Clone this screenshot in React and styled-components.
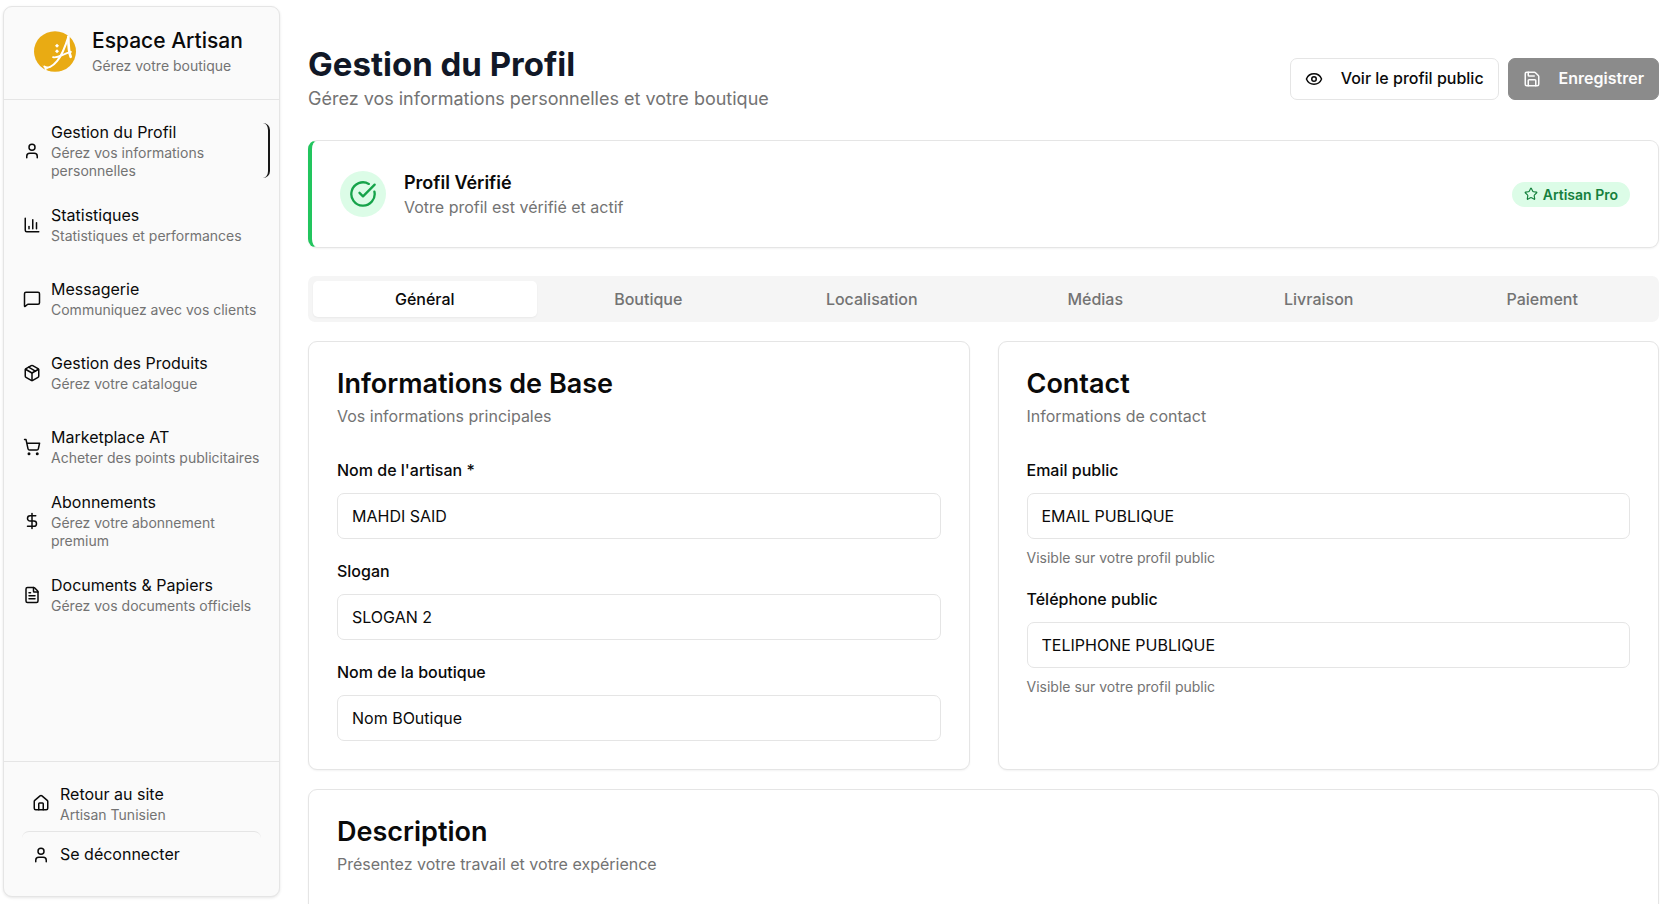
import React, { useState } from "react";
import styled, { createGlobalStyle } from "styled-components";
import {
  User,
  ChartColumn,
  MessageSquare,
  Package,
  ShoppingCart,
  DollarSign,
  FileText,
  Eye,
  Save,
  CircleCheckBig,
  Star,
} from "lucide-react";

const NAV_ITEMS = [
  { icon: User, title: "Gestion du Profil", text: "Gérez vos informations personnelles", active: true },
  { icon: ChartColumn, title: "Statistiques", text: "Statistiques et performances" },
  { icon: MessageSquare, title: "Messagerie", text: "Communiquez avec vos clients" },
  { icon: Package, title: "Gestion des Produits", text: "Gérez votre catalogue" },
  { icon: ShoppingCart, title: "Marketplace AT", text: "Acheter des points publicitaires" },
  { icon: DollarSign, title: "Abonnements", text: "Gérez votre abonnement premium" },
  { icon: FileText, title: "Documents & Papiers", text: "Gérez vos documents officiels" },
];

const TABS = ["Général", "Boutique", "Localisation", "Médias", "Livraison", "Paiement"];

const Logo = () => (
  <LogoSvg viewBox="0 0 126 122" aria-hidden="true">
    <ellipse cx="63" cy="61" rx="63" ry="61" fill="#e9ab13" />
    <g fill="none" stroke="#fff" strokeLinecap="round" strokeLinejoin="round">
      <path d="M103 17C94 46 84 72 69 90C56 106 40 114 31 106" strokeWidth="6" />
      <path d="M103 17C103 42 104 62 110 77" strokeWidth="8" />
      <path d="M57 78C74 82 85 68 111 62" strokeWidth="5" />
    </g>
    <path d="M25 99C27 108 34 113 44 111L34 117Z" fill="#fff" />
    <g fill="#fff">
      <path d="M69 38l6 6-6 6-6-6z" />
      <path d="M69 54l6 6-6 6-6-6z" />
    </g>
  </LogoSvg>
);

const HomeIcon = () => (
  <svg
    width="18"
    height="18"
    viewBox="0 0 24 24"
    fill="none"
    stroke="currentColor"
    strokeWidth="2"
    strokeLinecap="round"
    strokeLinejoin="round"
    aria-hidden="true"
  >
    <path d="M15 21v-8a1 1 0 0 0-1-1h-4a1 1 0 0 0-1 1v8" />
    <path d="M3 10a2 2 0 0 1 .709-1.528l7-5.999a2 2 0 0 1 2.582 0l7 5.999A2 2 0 0 1 21 10v9a2 2 0 0 1-2 2H5a2 2 0 0 1-2-2z" />
  </svg>
);

const TextField = ({ id, label, value, hint }) => (
  <Field>
    <Label htmlFor={id}>{label}</Label>
    <Input id={id} type="text" defaultValue={value} />
    {hint && <Hint>{hint}</Hint>}
  </Field>
);

const App = () => {
  const [tab, setTab] = useState("Général");

  return (
    <>
      <GlobalStyle />
      <Page>
        <Sidebar>
          <Brand>
            <Logo />
            <BrandText>
              <BrandName>Espace Artisan</BrandName>
              <ItemText>Gérez votre boutique</ItemText>
            </BrandText>
          </Brand>
          <Nav>
            {NAV_ITEMS.map(({ icon: Icon, title, text, active }) => (
              <NavItem key={title} href="#" $active={active}>
                <Icon size={18} />
                <div>
                  <ItemTitle>{title}</ItemTitle>
                  <ItemText>{text}</ItemText>
                </div>
              </NavItem>
            ))}
          </Nav>
          <SidebarFooter>
            <FooterLink href="#">
              <HomeIcon />
              <div>
                <ItemTitle>Retour au site</ItemTitle>
                <ItemText>Artisan Tunisien</ItemText>
              </div>
            </FooterLink>
            <Logout type="button">
              <User size={18} />
              <ItemTitle>Se déconnecter</ItemTitle>
            </Logout>
          </SidebarFooter>
        </Sidebar>

        <Main>
          <Header>
            <div>
              <Title>Gestion du Profil</Title>
              <Subtitle>Gérez vos informations personnelles et votre boutique</Subtitle>
            </div>
            <Actions>
              <Button type="button">
                <Eye size={18} />
                Voir le profil public
              </Button>
              <Button type="button" $primary disabled>
                <Save size={18} />
                Enregistrer
              </Button>
            </Actions>
          </Header>

          <StatusCard>
            <StatusIcon>
              <CircleCheckBig size={28} />
            </StatusIcon>
            <StatusBody>
              <StatusTitle>Profil Vérifié</StatusTitle>
              <Muted>Votre profil est vérifié et actif</Muted>
            </StatusBody>
            <Badge>
              <Star size={14} />
              Artisan Pro
            </Badge>
          </StatusCard>

          <TabList role="tablist">
            {TABS.map((name) => (
              <Tab
                key={name}
                type="button"
                role="tab"
                aria-selected={tab === name}
                $active={tab === name}
                onClick={() => setTab(name)}
              >
                {name}
              </Tab>
            ))}
          </TabList>

          <Panel>
            <Columns>
              <Card>
                <CardHeader>
                  <CardTitle>Informations de Base</CardTitle>
                  <Muted>Vos informations principales</Muted>
                </CardHeader>
                <Fields>
                  <TextField id="nom" label="Nom de l'artisan *" value="MAHDI SAID" />
                  <TextField id="slogan" label="Slogan" value="SLOGAN 2" />
                  <TextField id="boutique" label="Nom de la boutique" value="Nom BOutique" />
                </Fields>
              </Card>
              <Card>
                <CardHeader>
                  <CardTitle>Contact</CardTitle>
                  <Muted>Informations de contact</Muted>
                </CardHeader>
                <Fields>
                  <TextField
                    id="email"
                    label="Email public"
                    value="EMAIL PUBLIQUE"
                    hint="Visible sur votre profil public"
                  />
                  <TextField
                    id="telephone"
                    label="Téléphone public"
                    value="TELIPHONE PUBLIQUE"
                    hint="Visible sur votre profil public"
                  />
                </Fields>
              </Card>
            </Columns>
            <DescriptionCard>
              <CardHeader>
                <CardTitle>Description</CardTitle>
                <Muted>Présentez votre travail et votre expérience</Muted>
              </CardHeader>
            </DescriptionCard>
          </Panel>
        </Main>
      </Page>
    </>
  );
};

export default App;

const GlobalStyle = createGlobalStyle`
  *, *::before, *::after {
    box-sizing: border-box;
  }
  body {
    margin: 0;
    background: #fff;
    color: #0a0a0a;
    font-family: Inter, "Liberation Sans", sans-serif;
    font-size: 16px;
    line-height: 23px;
  }
  h1, h2, h3, p {
    margin: 0;
  }
  button, input {
    font: inherit;
    color: inherit;
  }
  svg {
    flex-shrink: 0;
  }
`;

const Page = styled.div`
  display: flex;
  height: 100vh;
  overflow: hidden;
`;

const Sidebar = styled.aside`
  display: flex;
  flex-direction: column;
  flex-shrink: 0;
  width: 277px;
  margin: 6px 0 7px 3px;
  background: #fafafa;
  border: 1px solid #e5e5e5;
  border-radius: 9px;
  box-shadow: 0 1px 3px rgba(0, 0, 0, 0.1);
`;

const Brand = styled.div`
  display: flex;
  align-items: center;
  gap: 16px;
  padding: 20px 30px 24px;
  border-bottom: 1px solid #e5e5e5;
`;

const LogoSvg = styled.svg`
  width: 42px;
  height: 41px;
`;

const BrandText = styled.div`
  display: flex;
  flex-direction: column;
  gap: 2px;
`;

const BrandName = styled.h2`
  font-size: 21px;
  font-weight: 500;
  line-height: 28px;
`;

const ItemTitle = styled.div`
  font-size: 16px;
  line-height: 23px;
`;

const ItemText = styled.div`
  color: #737373;
  font-size: 14px;
  line-height: 18px;
`;

const Nav = styled.nav`
  display: flex;
  flex: 1;
  flex-direction: column;
  gap: 19px;
  padding: 23px 9px;
`;

const NavItem = styled.a`
  display: flex;
  align-items: center;
  gap: 10px;
  height: 55px;
  padding: 0 9px 0 10px;
  border-right: ${(props) => (props.$active ? "2px solid #171717" : "0")};
  border-radius: 7px;
  color: inherit;
  text-decoration: none;
`;

const SidebarFooter = styled.div`
  display: flex;
  flex-direction: column;
  gap: 5px;
  padding: 18px 18px 19px;
  border-top: 1px solid #e5e5e5;
`;

const FooterLink = styled.a`
  display: flex;
  align-items: center;
  gap: 10px;
  height: 46px;
  padding: 0 10px;
  color: inherit;
  text-decoration: none;
`;

const Logout = styled.button`
  display: flex;
  align-items: center;
  gap: 10px;
  height: 46px;
  padding: 0 10px;
  background: none;
  border: 0;
  border-top: 1px solid #e5e5e5;
  border-radius: 7px;
  text-align: left;
`;

const Main = styled.main`
  flex: 1;
  min-width: 0;
  padding: 44px 15px 0 28px;
`;

const Header = styled.header`
  display: flex;
  align-items: center;
  justify-content: space-between;
  margin-bottom: 27px;
`;

const Title = styled.h1`
  color: #111827;
  font-size: 33px;
  font-weight: 700;
  line-height: 41px;
`;

const Subtitle = styled.p`
  color: #737373;
  font-size: 18px;
  line-height: 28px;
`;

const Actions = styled.div`
  display: flex;
  gap: 9px;
`;

const Button = styled.button`
  display: flex;
  align-items: center;
  gap: 18px;
  height: 42px;
  padding: 0 14px;
  background: ${(props) => (props.$primary ? "#8b8b8b" : "#fff")};
  border: 1px solid ${(props) => (props.$primary ? "#8b8b8b" : "#e5e5e5")};
  border-radius: 7px;
  color: ${(props) => (props.$primary ? "#fcfcfc" : "#0a0a0a")};
  font-weight: ${(props) => (props.$primary ? 600 : 500)};
`;

const Card = styled.section`
  background: #fff;
  border: 1px solid #e5e5e5;
  border-radius: 9px;
  box-shadow: 0 1px 2px rgba(0, 0, 0, 0.05);
  padding: 28px;
`;

const StatusCard = styled(Card)`
  display: flex;
  align-items: center;
  gap: 18px;
  margin-bottom: 28px;
  border-left: 4px solid #22c55e;
`;

const StatusIcon = styled.div`
  display: flex;
  align-items: center;
  justify-content: center;
  width: 46px;
  height: 46px;
  background: #dcfce7;
  border-radius: 50%;
  color: #16a34a;
`;

const StatusBody = styled.div`
  flex: 1;
`;

const StatusTitle = styled.h3`
  font-size: 18px;
  font-weight: 600;
  line-height: 27px;
`;

const Muted = styled.p`
  color: #737373;
  font-size: 16px;
  line-height: 23px;
`;

const Badge = styled.span`
  display: flex;
  align-items: center;
  gap: 5px;
  height: 25px;
  padding: 0 12px;
  background: #dcfce7;
  border-radius: 13px;
  color: #15803d;
  font-size: 14px;
  font-weight: 600;
`;

const TabList = styled.div`
  display: grid;
  grid-template-columns: repeat(6, 1fr);
  height: 46px;
  padding: 5px;
  margin-bottom: 19px;
  background: #f5f5f5;
  border-radius: 7px;
`;

const Tab = styled.button`
  padding: 0;
  background: ${(props) => (props.$active ? "#fff" : "transparent")};
  border: 0;
  border-radius: 5px;
  box-shadow: ${(props) => (props.$active ? "0 1px 2px rgba(0, 0, 0, 0.05)" : "none")};
  color: ${(props) => (props.$active ? "#0a0a0a" : "#737373")};
  font-weight: 500;
`;

const Panel = styled.div`
  display: flex;
  flex-direction: column;
  gap: 19px;
`;

const Columns = styled.div`
  display: grid;
  grid-template-columns: 1fr 1fr;
  gap: 28px;
`;

const CardHeader = styled.div`
  display: flex;
  flex-direction: column;
  gap: 7px;
  margin-bottom: 28px;
`;

const CardTitle = styled.h3`
  font-size: 27px;
  font-weight: 600;
  line-height: 28px;
`;

const Fields = styled.div`
  display: flex;
  flex-direction: column;
  gap: 18px;
`;

const Field = styled.div`
  display: flex;
  flex-direction: column;
  gap: 9px;
`;

const Label = styled.label`
  font-weight: 500;
  line-height: 28px;
`;

const Input = styled.input`
  width: 100%;
  height: 46px;
  padding: 0 14px;
  background: #fff;
  border: 1px solid #e5e5e5;
  border-radius: 7px;
`;

const Hint = styled.p`
  color: #737373;
  font-size: 14px;
  line-height: 19px;
`;

const DescriptionCard = styled(Card)`
  min-height: 240px;
`;
